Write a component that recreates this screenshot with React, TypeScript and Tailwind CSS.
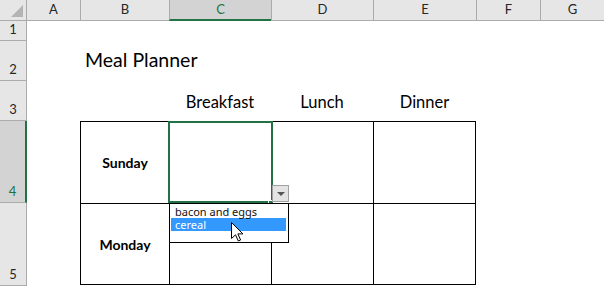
import React from "react";

const columns = ["A", "B", "C", "D", "E", "F", "G"];
const meals = ["Breakfast", "Lunch", "Dinner"];
const options = ["bacon and eggs", "cereal"];

const headerCell = "flex items-center justify-center bg-[#e6e6e6] border-b border-[#ababab] text-[13px] text-[#262626]";
const rowHeaderCell = "flex items-end justify-center pb-[4px] bg-[#e6e6e6] border-r border-b border-[#ababab] text-[13px] leading-none text-[#262626]";
const tableCell = "border-l border-t border-black";

const Cursor: React.FC = () => (
	<svg width="13" height="20" viewBox="0 0 13 20" className="absolute left-[61px] top-[18px]">
		<path
			d="M0.5 0.5V16.5L4.5 12.8L7.3 19L9.6 18L6.9 11.9H11.9Z"
			fill="#fff"
			stroke="#000"
			strokeWidth="1"
			strokeLinejoin="miter"
		/>
	</svg>
);

const App: React.FC = () => {
	return (
		<div className="w-[604px] h-[286px] bg-white overflow-hidden font-['Lato',sans-serif] text-black">
			<div className="grid grid-cols-[27px_53px_89px_102px_102px_103px_64px_64px] grid-rows-[21px_20px_40px_40px_82px_83px]">
				{/* CORNER */}
				<div className={`${headerCell} border-r relative`}>
					<div className="absolute right-[3px] bottom-[3px] w-0 h-0 border-l-[12px] border-l-transparent border-b-[12px] border-b-[#b4b4b4]"></div>
				</div>
				{/* COLUMN HEADERS */}
				{columns.map((c, i) =>
					c === "C" ? (
						<div
							key={c}
							className="flex items-center justify-center bg-[#d3d3d3] border-l border-[#ababab] border-b-2 border-b-[#217346] text-[13px] text-[#217346]">
							{c}
						</div>
					) : (
						<div key={c} className={`${headerCell} ${i > 0 ? "border-l" : ""}`}>
							{c}
						</div>
					)
				)}

				{/* ROW 1 */}
				<div className={rowHeaderCell}>1</div>
				<div className="col-span-7"></div>

				{/* ROW 2 */}
				<div className={rowHeaderCell}>2</div>
				<div></div>
				<div className="col-span-6 flex items-end pl-[5px] pb-[12px] text-[19.5px] leading-none whitespace-nowrap">
					Meal Planner
				</div>

				{/* ROW 3 */}
				<div className={rowHeaderCell}>3</div>
				<div className="col-span-2"></div>
				{meals.map((m) => (
					<div key={m} className="flex items-end justify-center pb-[11px] text-[16.5px] leading-none">
						{m}
					</div>
				))}
				<div className="col-span-2"></div>

				{/* ROW 4 */}
				<div className="flex items-end justify-center pb-[4px] bg-[#d3d3d3] border-b border-[#ababab] border-r-2 border-r-[#217346] text-[13px] leading-none text-[#217346]">
					4
				</div>
				<div></div>
				<div className={`${tableCell} flex items-center justify-center font-bold text-[14px]`}>Sunday</div>
				<div className={`${tableCell} relative`}>
					{/* SELECTION */}
					<div className="absolute -left-[2px] -top-px w-[105px] h-[82px] border-2 border-[#217346] z-10"></div>
					<div className="absolute left-[98px] top-[78px] w-[6px] h-[6px] bg-[#217346] border border-white z-20"></div>
					{/* DROPDOWN BUTTON */}
					<div className="absolute left-[102px] top-[63px] w-[17px] h-[17px] bg-[#e3e3e3] border border-[#a0a0a0] flex items-center justify-center z-20">
						<div className="w-0 h-0 border-l-[4px] border-r-[4px] border-t-[4px] border-l-transparent border-r-transparent border-t-[#555]"></div>
					</div>
					{/* DROPDOWN LIST */}
					<div className="absolute -left-px top-[81px] w-[120px] h-[40px] bg-white border border-black p-px pr-[2px] z-30 font-['Noto_Sans',sans-serif] text-[11px] leading-[13px]">
						{options.map((o, i) => (
							<div
								key={o}
								className={`h-[13px] pl-[4px] ${i === 1 ? "bg-[#3399ff] text-white" : "text-[#111]"}`}>
								{o}
							</div>
						))}
						<Cursor />
					</div>
				</div>
				<div className={tableCell}></div>
				<div className={`${tableCell} border-r`}></div>
				<div className="col-span-2"></div>

				{/* ROW 5 */}
				<div className={rowHeaderCell}>5</div>
				<div></div>
				<div className={`${tableCell} border-b h-[82px] flex items-center justify-center font-bold text-[14px]`}>
					Monday
				</div>
				<div className={`${tableCell} border-b h-[82px]`}></div>
				<div className={`${tableCell} border-b h-[82px]`}></div>
				<div className={`${tableCell} border-b border-r h-[82px]`}></div>
				<div className="col-span-2"></div>
			</div>
		</div>
	);
};

export default App;
